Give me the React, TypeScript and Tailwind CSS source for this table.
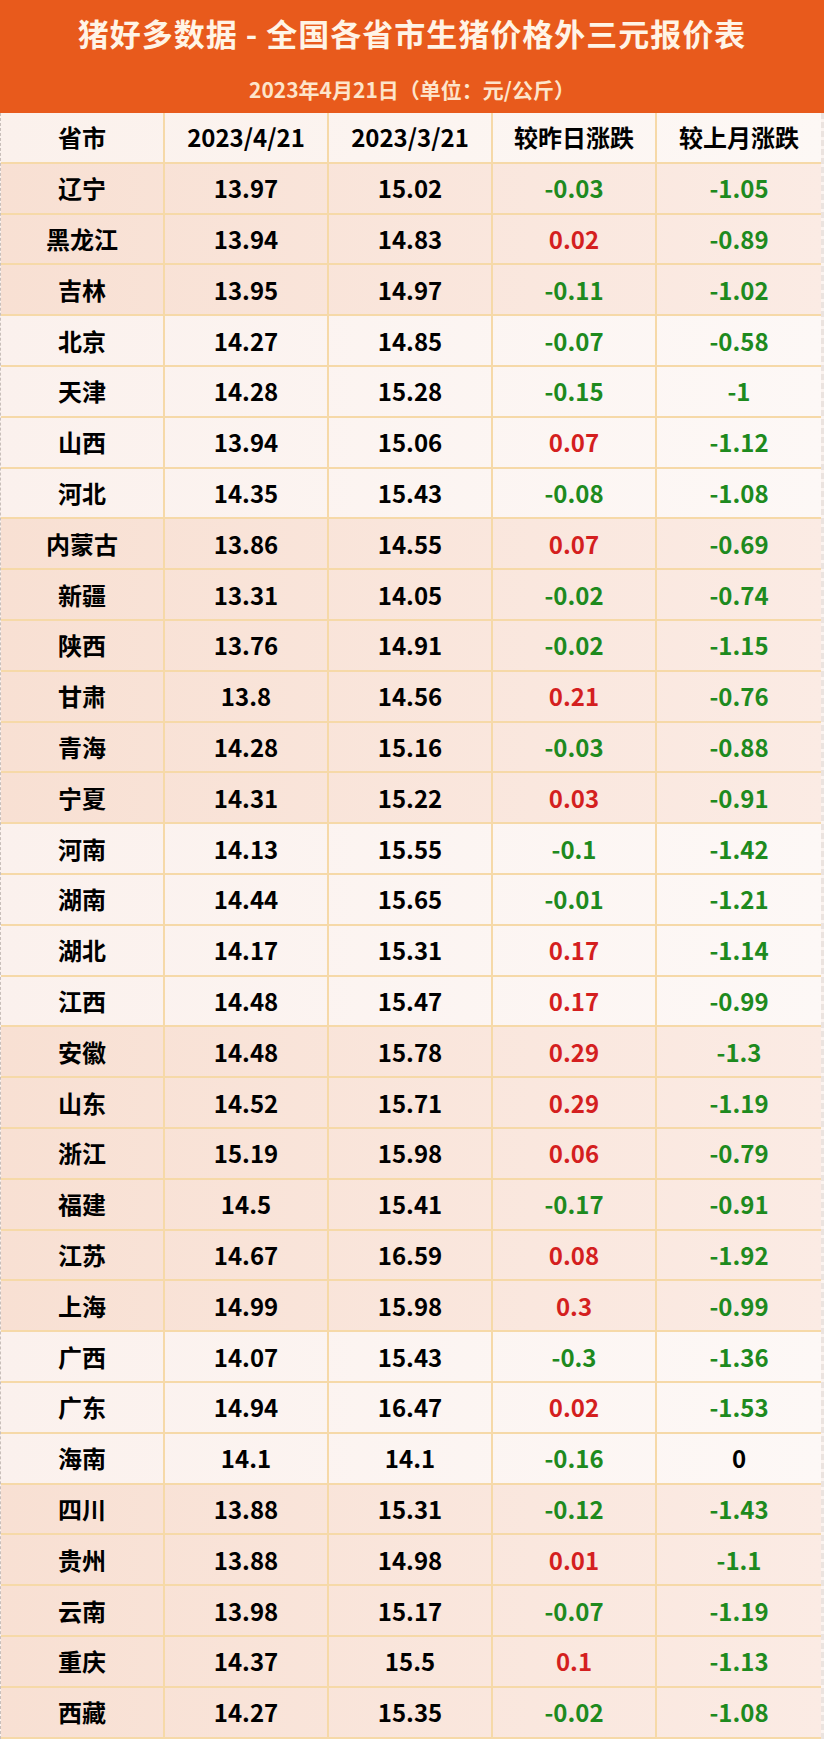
const rows: [string, string, string, string, string][] = [
  ["辽宁", "13.97", "15.02", "-0.03", "-1.05"],
  ["黑龙江", "13.94", "14.83", "0.02", "-0.89"],
  ["吉林", "13.95", "14.97", "-0.11", "-1.02"],
  ["北京", "14.27", "14.85", "-0.07", "-0.58"],
  ["天津", "14.28", "15.28", "-0.15", "-1"],
  ["山西", "13.94", "15.06", "0.07", "-1.12"],
  ["河北", "14.35", "15.43", "-0.08", "-1.08"],
  ["内蒙古", "13.86", "14.55", "0.07", "-0.69"],
  ["新疆", "13.31", "14.05", "-0.02", "-0.74"],
  ["陕西", "13.76", "14.91", "-0.02", "-1.15"],
  ["甘肃", "13.8", "14.56", "0.21", "-0.76"],
  ["青海", "14.28", "15.16", "-0.03", "-0.88"],
  ["宁夏", "14.31", "15.22", "0.03", "-0.91"],
  ["河南", "14.13", "15.55", "-0.1", "-1.42"],
  ["湖南", "14.44", "15.65", "-0.01", "-1.21"],
  ["湖北", "14.17", "15.31", "0.17", "-1.14"],
  ["江西", "14.48", "15.47", "0.17", "-0.99"],
  ["安徽", "14.48", "15.78", "0.29", "-1.3"],
  ["山东", "14.52", "15.71", "0.29", "-1.19"],
  ["浙江", "15.19", "15.98", "0.06", "-0.79"],
  ["福建", "14.5", "15.41", "-0.17", "-0.91"],
  ["江苏", "14.67", "16.59", "0.08", "-1.92"],
  ["上海", "14.99", "15.98", "0.3", "-0.99"],
  ["广西", "14.07", "15.43", "-0.3", "-1.36"],
  ["广东", "14.94", "16.47", "0.02", "-1.53"],
  ["海南", "14.1", "14.1", "-0.16", "0"],
  ["四川", "13.88", "15.31", "-0.12", "-1.43"],
  ["贵州", "13.88", "14.98", "0.01", "-1.1"],
  ["云南", "13.98", "15.17", "-0.07", "-1.19"],
  ["重庆", "14.37", "15.5", "0.1", "-1.13"],
  ["西藏", "14.27", "15.35", "-0.02", "-1.08"],
];

// rows drawn on the lighter tint; the rest are pink
const lightRows = [3, 4, 5, 6, 13, 14, 15, 16, 23, 24, 25];

function changeColor(v: string) {
  if (v.startsWith("-")) return "text-[#1e8a1e]";
  if (Number(v) === 0) return "text-black";
  return "text-[#d41f1f]";
}

function Cell({ children, className = "" }: any) {
  return (
    <div
      className={`flex items-center justify-center border-r-2 border-b-2 border-[#f6d9a8] last:border-r-0 ${className}`}
    >
      {children}
    </div>
  );
}

export default function App() {
  return (
    <div
      className="w-[824px] bg-[#fbf3ef]"
      style={{ fontFamily: '"Noto Sans CJK SC", "Noto Sans", sans-serif' }}
    >
      <div className="h-[113px] bg-[#e85a1c] flex flex-col items-center pt-[13px]">
        <div className="text-[31px] leading-[40px] font-bold text-[#fff4e6] tracking-[1px]">
          猪好多数据 - 全国各省市生猪价格外三元报价表
        </div>
        <div className="mt-[22px] text-[21px] leading-[28px] font-bold text-[#fde5cb]">
          2023年4月21日（单位：元/公斤）
        </div>
      </div>

      <div className="border-l border-dashed border-[#c9bfba] border-r-[3px] border-r-[#ebe3df]">
        <div className="grid grid-cols-5 h-[50.8px] bg-gradient-to-r from-[#fbf1ec] to-[#fdf8f5] text-[24px] font-bold text-black">
          <Cell>省市</Cell>
          <Cell>2023/4/21</Cell>
          <Cell>2023/3/21</Cell>
          <Cell>较昨日涨跌</Cell>
          <Cell>较上月涨跌</Cell>
        </div>
        {rows.map((r, i) => {
          const light = lightRows.includes(i);
          return (
            <div
              key={r[0]}
              className={`grid grid-cols-5 h-[50.8px] text-[24px] font-bold ${
                light
                  ? "bg-gradient-to-r from-[#fbf1ed] to-[#fdf8f6]"
                  : "bg-gradient-to-r from-[#f8e0d3] to-[#fbebe4]"
              }`}
            >
              <Cell className="text-black">{r[0]}</Cell>
              <Cell className="text-black">{r[1]}</Cell>
              <Cell className="text-black">{r[2]}</Cell>
              <Cell className={changeColor(r[3])}>{r[3]}</Cell>
              <Cell className={changeColor(r[4])}>{r[4]}</Cell>
            </div>
          );
        })}
      </div>
    </div>
  );
}
